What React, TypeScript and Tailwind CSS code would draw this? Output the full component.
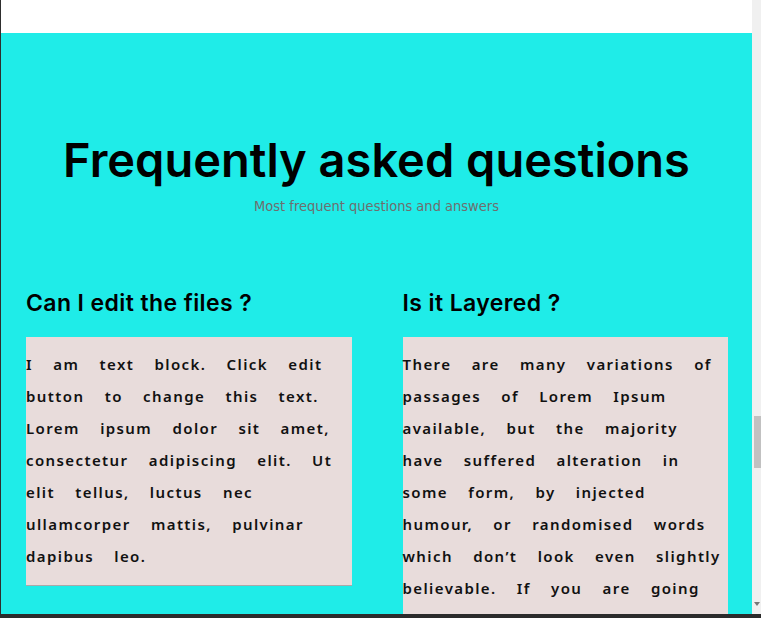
const faqs = [
  {
    q: 'Can I edit the files ?',
    a: 'I am text block. Click edit button to change this text. Lorem ipsum dolor sit amet, consectetur adipiscing elit. Ut elit tellus, luctus nec ullamcorper mattis, pulvinar dapibus leo.',
  },
  {
    q: 'Is it Layered ?',
    a: 'There are many variations of passages of Lorem Ipsum available, but the majority have suffered alteration in some form, by injected humour, or randomised words which don\u2019t look even slightly believable. If you are going to use a passage of Lorem Ipsum, you need to be sure there isn\u2019t anything embarrassing.',
  },
];

function Scrollbar() {
  return (
    <div className="w-[9px] shrink-0 bg-[#f0f0f0] flex flex-col">
      <div className="h-[416px]" />
      <div className="ml-[2px] h-[52px] bg-[#c1c1c1]" />
      <div className="flex-1" />
      <div className="h-[14px] flex justify-end pr-[1px]">
        <svg width="6" height="4" viewBox="0 0 6 4" className="mt-[2px]">
          <path d="M0 0h6L3 4z" fill="#777" />
        </svg>
      </div>
    </div>
  );
}

export default function App() {
  return (
    <div className="h-[618px] w-[761px] overflow-hidden flex flex-col bg-white">
      <div className="flex flex-1 min-h-0">
        <div className="w-px shrink-0 bg-[#2e2e2e]" />
        <main className="flex-1 min-w-0 overflow-hidden">
          <div className="h-[33px] bg-white" />
          <section className="bg-[#1fece8] pt-[97px] pb-20">
            <h1
              className="text-center text-[47px] leading-[60px] font-semibold text-black tracking-[0px]"
              style={{ fontFamily: 'Inter, "Noto Sans", sans-serif' }}
            >
              Frequently asked questions
            </h1>
            <p
              className="mt-[6px] text-center text-[14.5px] leading-5 text-[#6e6e6e]"
              style={{ fontFamily: '"DejaVu Sans Condensed", "DejaVu Sans", sans-serif' }}
            >
              Most frequent questions and answers
            </p>
            <div className="mt-[73px] pl-[25px] pr-[24px] grid grid-cols-2 gap-[51px]">
              {faqs.map((f) => (
                <div key={f.q}>
                  <h3
                    className="text-[23px] leading-7 font-semibold text-black tracking-[0.4px]"
                    style={{ fontFamily: 'Inter, "Noto Sans", sans-serif' }}
                  >
                    {f.q}
                  </h3>
                  <div className="mt-[20px] bg-[#e8dcdb] pt-[11px] pb-[13px] shadow-[0_1px_0_#a9a9a9]">
                    <p
                      className="text-[15px] leading-8 font-semibold text-[#111] tracking-[1.4px] [word-spacing:15px]"
                      style={{ fontFamily: '"Noto Sans", sans-serif' }}
                    >
                      {f.a}
                    </p>
                  </div>
                </div>
              ))}
            </div>
          </section>
        </main>
        <Scrollbar />
      </div>
      <div className="h-[4px] shrink-0 bg-[#2b2b2b]" />
    </div>
  );
}
